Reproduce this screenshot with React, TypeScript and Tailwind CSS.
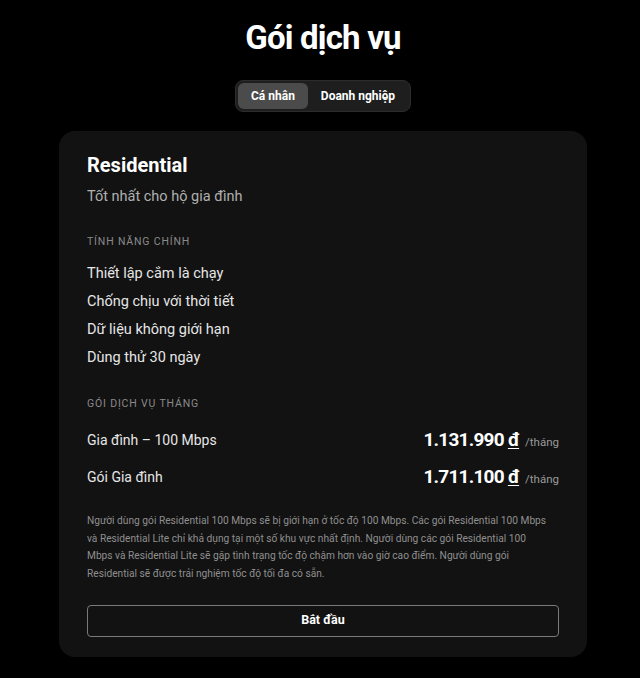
import { useState } from "react";

const features = [
  "Thiết lập cắm là chạy",
  "Chống chịu với thời tiết",
  "Dữ liệu không giới hạn",
  "Dùng thử 30 ngày",
];

const plans = [
  { name: "Gia đình – 100 Mbps", price: "1.131.990" },
  { name: "Gói Gia đình", price: "1.711.100" },
];

export default function App() {
  const [tab, setTab] = useState<"personal" | "business">("personal");

  return (
    <div
      className="min-h-screen bg-black text-white pt-[18px] pb-[22px]"
      style={{ fontFamily: "Roboto, 'Noto Sans', sans-serif" }}
    >
      <div className="w-[646px]">
        <h1 className="text-center text-[33px] leading-[40px] font-bold tracking-tight">
          Gói dịch vụ
        </h1>

        <div className="flex justify-center mt-[22px]">
          <div className="flex p-[2px] rounded-lg bg-[#1e1e1e] border border-[#2c2c2c]">
            <button
              onClick={() => setTab("personal")}
              className={`h-[26px] px-[13px] rounded-md text-[12px] font-bold ${
                tab === "personal" ? "bg-[#4b4b4b] text-white" : "text-white"
              }`}
            >
              Cá nhân
            </button>
            <button
              onClick={() => setTab("business")}
              className={`h-[26px] px-[13px] rounded-md text-[12px] font-bold ${
                tab === "business" ? "bg-[#4b4b4b] text-white" : "text-white"
              }`}
            >
              Doanh nghiệp
            </button>
          </div>
        </div>
      </div>

      <div className="ml-[59px] w-[528px] mt-[19px] rounded-2xl bg-[#121212] px-[28px] pt-[20px] pb-[20px]">
        <h2 className="text-[20px] leading-[28px] font-bold">Residential</h2>
        <p className="mt-[8px] text-[14.5px] leading-[20px] text-[#b0b0b0]">
          Tốt nhất cho hộ gia đình
        </p>

        <div className="mt-[27px] text-[10.5px] leading-[16px] tracking-[0.08em] text-[#8a8a8a]">
          TÍNH NĂNG CHÍNH
        </div>
        <ul className="mt-[14px] flex flex-col gap-[8px]">
          {features.map((f) => (
            <li key={f} className="text-[14.5px] leading-[20px] text-[#e6e6e6]">
              {f}
            </li>
          ))}
        </ul>

        <div className="mt-[28px] text-[10.5px] leading-[16px] tracking-[0.08em] text-[#8a8a8a]">
          GÓI DỊCH VỤ THÁNG
        </div>
        <div className="mt-[14px] flex flex-col gap-[9px]">
          {plans.map((p) => (
            <div key={p.name} className="flex items-center justify-between h-[28px]">
              <span className="text-[14px] text-[#e6e6e6]">{p.name}</span>
              <span className="flex items-baseline">
                <span className="text-[19px] font-bold tracking-[-0.04em]">
                  {p.price} <span className="underline underline-offset-2">đ</span>
                </span>
                <span className="ml-[6px] text-[11.5px] text-[#9a9a9a]">/tháng</span>
              </span>
            </div>
          ))}
        </div>

        <p className="mt-[21px] text-[10.2px] leading-[17.7px] text-[#8f8f8f]">
          Người dùng gói Residential 100 Mbps sẽ bị giới hạn ở tốc độ 100 Mbps. Các gói Residential 100 Mbps
          <br />
          và Residential Lite chỉ khả dụng tại một số khu vực nhất định. Người dùng các gói Residential 100
          <br />
          Mbps và Residential Lite sẽ gặp tình trạng tốc độ chậm hơn vào giờ cao điểm. Người dùng gói
          <br />
          Residential sẽ được trải nghiệm tốc độ tối đa có sẵn.
        </p>

        <button className="mt-[22px] w-full h-[32px] rounded border border-[#7a7a7a] text-[12.5px] font-bold text-white">
          Bắt đầu
        </button>
      </div>
    </div>
  );
}
